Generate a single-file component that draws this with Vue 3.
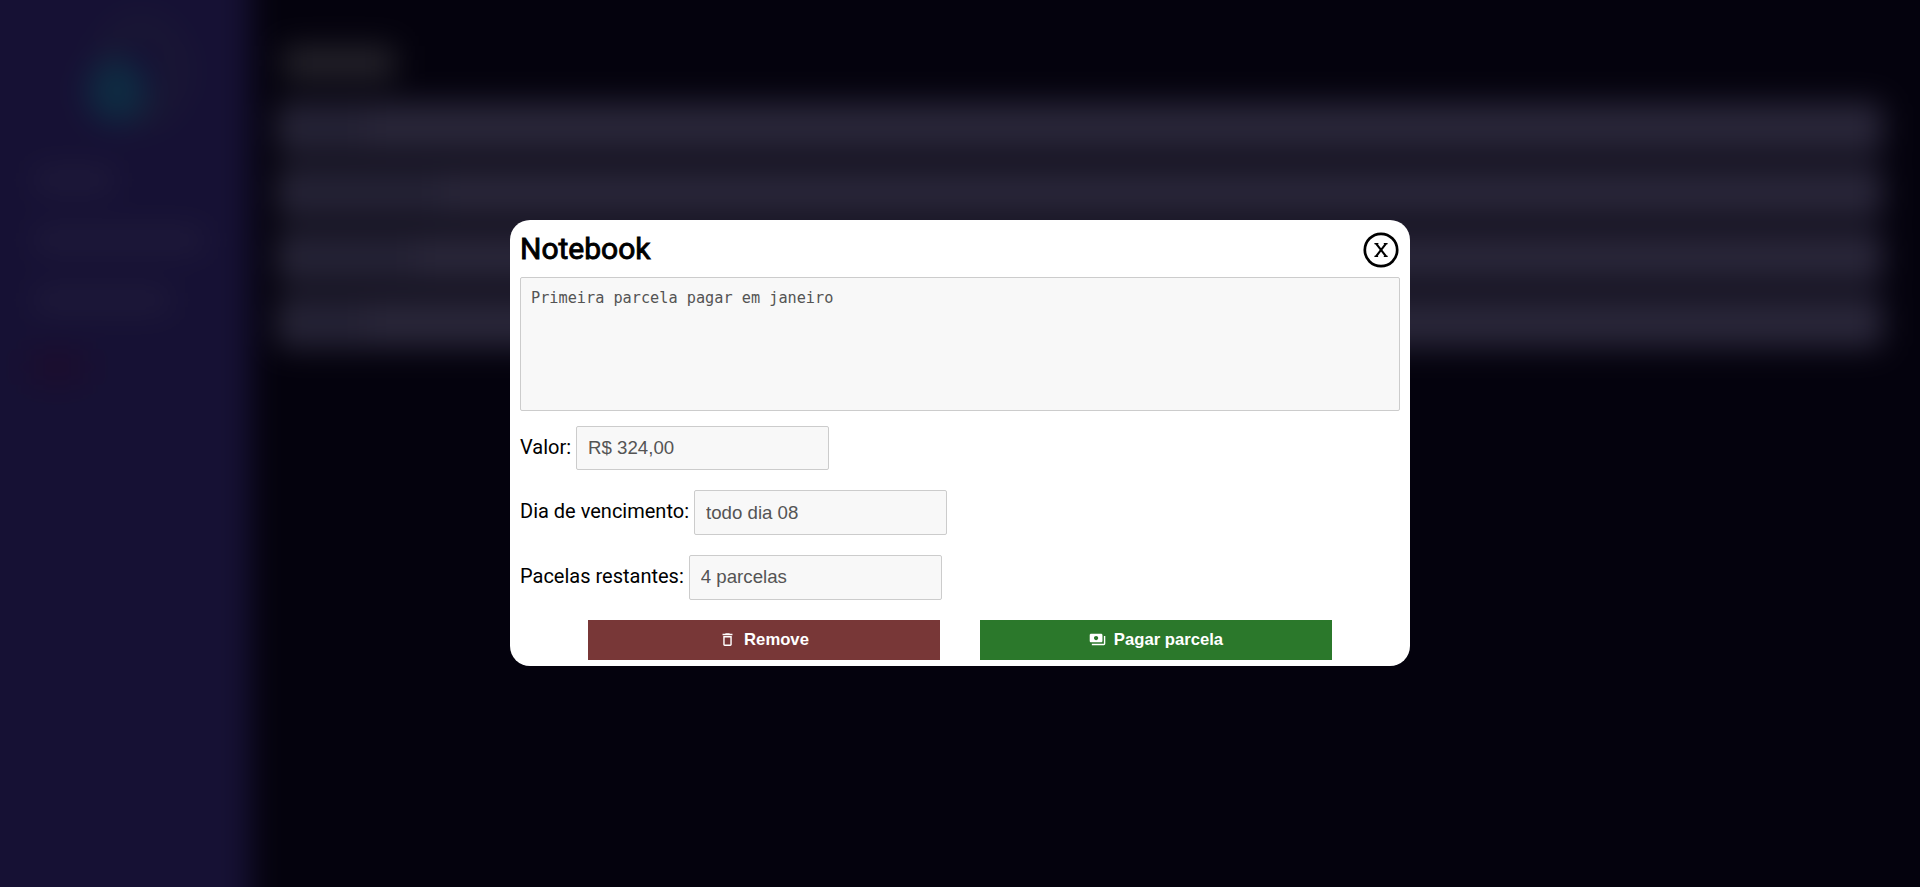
<script setup>
import { ref } from 'vue'

const note = ref('Primeira parcela pagar em janeiro')
const fields = ref([
  { label: 'Valor:', value: 'R$ 324,00' },
  { label: 'Dia de vencimento:', value: 'todo dia 08' },
  { label: 'Pacelas restantes:', value: '4 parcelas' },
])
</script>

<template>
  <div class="screen">
    <div class="page" aria-hidden="true">
      <aside class="sidebar">
        <div class="logo"><span class="ring"></span><span class="drop"></span></div>
        <span class="nav nav-short"></span>
        <span class="nav nav-long"></span>
        <span class="nav nav-mid"></span>
        <span class="logout"></span>
      </aside>
      <main class="content">
        <div class="heading"></div>
        <div class="list">
          <div class="item"><span class="name n1"></span></div>
          <div class="item"><span class="name n2"></span></div>
          <div class="item"><span class="name n3"></span></div>
          <div class="item"><span class="name n1"></span></div>
        </div>
      </main>
    </div>

    <div class="overlay">
      <section class="modal" role="dialog">
        <header class="head">
          <h1>Notebook</h1>
          <button class="close" aria-label="Fechar">
            <svg width="36" height="36" viewBox="0 0 36 36" fill="none" stroke="#000">
              <circle cx="18" cy="18" r="16.2" stroke-width="2.7" />
              <path d="M11.4 11.7H15.4M20.8 11.7H24.600M11.4 24.4H15.1M20.8 24.4H24.700" stroke-width="1.2" />
              <path d="M13.100 11.7L23.100 24.4M23 11.7L13 24.4" stroke-width="2.1" />
            </svg>
          </button>
        </header>
        <textarea v-model="note" class="note" disabled spellcheck="false"></textarea>
        <div class="fields">
          <label v-for="f in fields" :key="f.label" class="field">
            <span>{{ f.label }}</span>
            <input v-model="f.value" disabled />
          </label>
        </div>
        <footer class="actions">
          <button class="btn remove">
            <svg width="17" height="17" viewBox="0 0 24 24" fill="#fff">
              <path d="M16 9v10H8V9h8m-1.500-6h-5l-1 1H5v2h14V4h-3.500l-1-1zM18 7H6v12c0 1.100.9 2 2 2h8c1.100 0 2-.9 2-2V7z" />
            </svg>
            Remove
          </button>
          <button class="btn pay">
            <svg width="17" height="17" viewBox="0 0 24 24" fill="#fff">
              <path d="M19 14V6c0-1.100-.9-2-2-2H3c-1.100 0-2 .9-2 2v8c0 1.100.9 2 2 2h14c1.100 0 2-.9 2-2zm-9-1c-1.660 0-3-1.340-3-3s1.340-3 3-3 3 1.340 3 3-1.340 3-3 3zm13-6v11c0 1.100-.9 2-2 2H4v-2h17V7h2z" />
            </svg>
            Pagar parcela
          </button>
        </footer>
      </section>
    </div>
  </div>
</template>

<style>
body { margin: 0; background: #04020d; }
</style>

<style scoped>
* { box-sizing: border-box; }
.screen {
  position: relative;
  height: 887px;
  overflow: hidden;
  background: #04020d;
  font-family: Roboto, sans-serif;
}
/* bleeds past the viewport so the blur does not fade at the edges */
.page {
  position: absolute;
  inset: -60px;
  display: flex;
  background: #04020d;
  filter: blur(15px);
}
.sidebar {
  width: 311px;
  background: #161134;
  display: flex;
  flex-direction: column;
  align-items: flex-start;
  padding: 90px 0 0 94px;
}
.logo { position: relative; width: 100px; height: 110px; margin-left: 50px; }
.ring {
  position: absolute;
  left: 14px;
  top: -12px;
  width: 86px;
  height: 106px;
  border-radius: 50%;
  border: 12px solid #1c1c33;
}
.drop {
  position: absolute;
  left: 3px;
  top: 29px;
  width: 60px;
  height: 64px;
  border-radius: 50%;
  background: #0e2b42;
}
.nav { height: 22px; border-radius: 8px; background: #201b3a; }
.nav-short { width: 80px; margin-top: 29px; }
.nav-long { width: 170px; margin-top: 38px; }
.nav-mid { width: 136px; margin-top: 38px; }
.logout {
  width: 62px;
  height: 36px;
  margin: 38px 0 0 -8px;
  border-radius: 8px;
  background: #1b0d2e;
}
.content { flex: 1; padding: 106px 97px 0 26px; }
.heading { width: 112px; height: 34px; margin-left: 6px; background: #24222a; }
.list { display: flex; flex-direction: column; gap: 13px; margin-top: 22px; }
.item {
  height: 51.700px;
  padding: 10px 14px;
  border-radius: 8px;
  background: #292639;
}
.name { display: block; height: 30px; background: #232134; }
.n1 { width: 76px; }
.n2 { width: 150px; }
.n3 { width: 125px; }

.overlay {
  position: absolute;
  inset: 0;
  display: flex;
  align-items: flex-start;
  justify-content: center;
  padding-top: 220px;
}
.modal {
  width: 900px;
  height: 446px;
  padding: 10px;
  border-radius: 20px;
  background: #fff;
  color: #000;
}
.head { display: flex; justify-content: space-between; height: 47px; }
h1 {
  margin: 0;
  font-size: 30px;
  line-height: 37px;
  font-weight: 400;
  -webkit-text-stroke: 0.900px #000;
}
.close {
  width: 36px;
  height: 36px;
  margin: 2px 1px 0 0;
  padding: 0;
  border: 0;
  background: none;
}
.close svg { display: block; }
.note {
  display: block;
  width: 880px;
  height: 134px;
  padding: 10px;
  border: 1px solid #ccc;
  border-radius: 2px;
  resize: none;
  background: #f8f8f8;
  color: #545454;
  font: 15.220px/20px "DejaVu Sans Mono", monospace;
}
.fields {
  display: flex;
  flex-direction: column;
  gap: 20px;
  margin-top: 14.600px;
}
.field {
  display: flex;
  align-items: center;
  gap: 5px;
  height: 44.670px;
  font-size: 20px;
}
.field span { padding-bottom: 2.600px; white-space: nowrap; }
input {
  width: 253px;
  height: 44.670px;
  padding: 0 11px;
  border: 1px solid #ccc;
  border-radius: 2px;
  background: #f8f8f8;
  color: #545454;
  font: 18.670px "Liberation Sans", sans-serif;
}
.actions {
  display: flex;
  justify-content: center;
  gap: 40px;
  margin-top: 20.400px;
}
.btn {
  display: flex;
  align-items: center;
  justify-content: center;
  gap: 8px;
  width: 352px;
  height: 40px;
  padding: 0;
  border: 0;
  color: #fff;
  font: bold 16.670px "Liberation Sans", sans-serif;
}
.remove { background: #783737; }
.pay { background: #2b782b; }
</style>
